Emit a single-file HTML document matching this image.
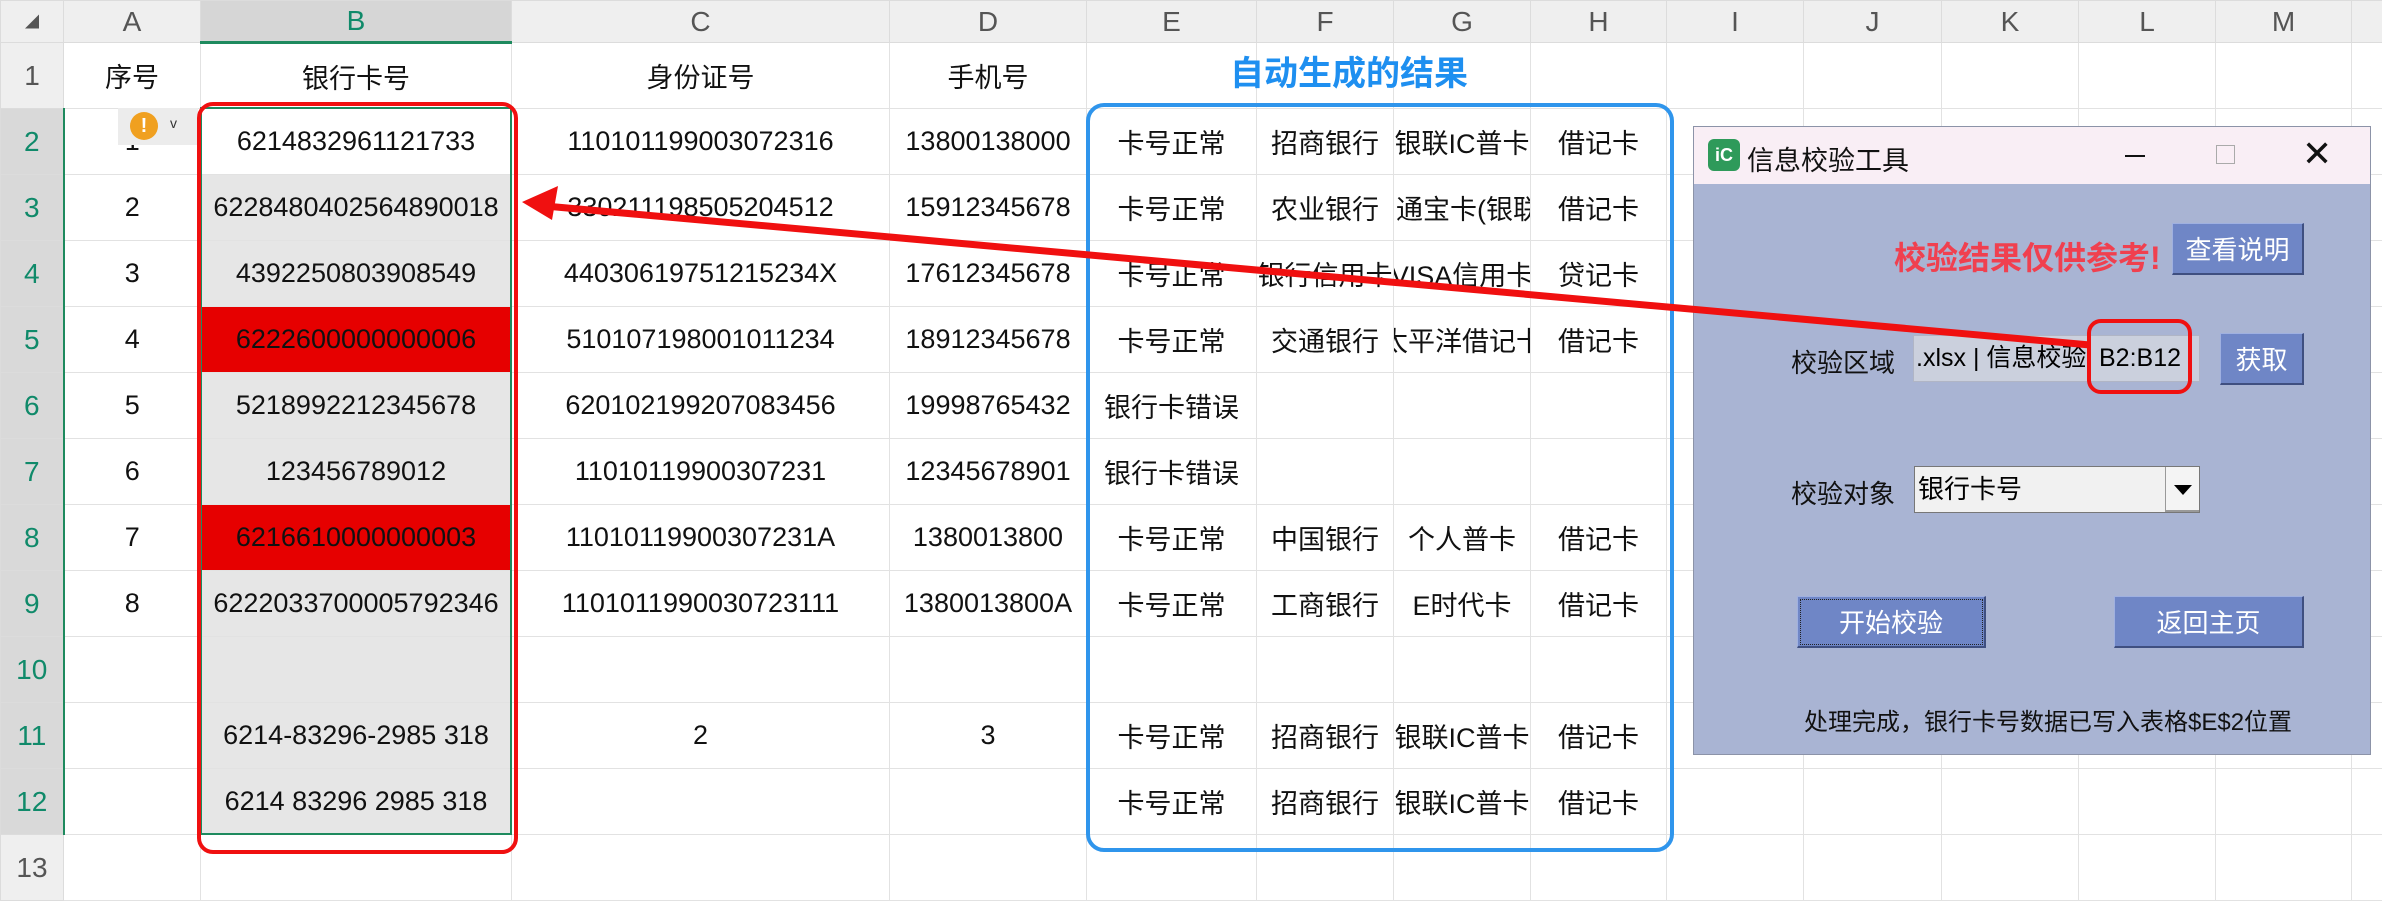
<!DOCTYPE html>
<html><head><meta charset="utf-8"><style>
*{margin:0;padding:0;box-sizing:border-box}
body{width:2382px;height:869px;overflow:hidden;background:#fff;position:relative;font-family:"Liberation Sans","Noto Sans CJK SC",sans-serif}
table{border-collapse:collapse;table-layout:fixed;position:absolute;left:0;top:0;width:2391px}
td{border:1px solid #e2e2e2;height:66px;font-size:27px;color:#111;white-space:nowrap;overflow:hidden;padding:0;max-width:0}
td div{display:flex;justify-content:center;align-items:center;height:100%;width:100%;white-space:nowrap}
tr.h td{height:42px;background:#efefef;color:#555;font-size:28px;border-color:#dcdcdc}
td.rh{background:#efefef;color:#555;font-size:28px;border-color:#dcdcdc}
td.rs{background:#d9d9d9;color:#108a6a;border-right:2px solid #1e8a5e}
td.bs{background:#e6e6e6}
td.red{background:#e60000}
tr.h td.bh{background:#d6d6d6;color:#108a6a;border-bottom:3px solid #1e8a5e}
.dlg{position:absolute;left:1693px;top:126px;width:678px;height:629px;background:#a9b4d3;border:1px solid #8c93a8}
.tb{position:absolute;left:0;top:0;width:100%;height:57px;background:#f9eef5}
.btn{position:absolute;background:#6f86c6;color:#fff;font-size:26px;display:flex;align-items:center;justify-content:center;border-right:2px solid #3f4f80;border-bottom:2px solid #3f4f80;border-top:1px solid #9fb0e0;border-left:1px solid #9fb0e0}
.lbl{position:absolute;font-size:26px;color:#111}
</style></head><body>
<table>
<colgroup><col style="width:63px"><col style="width:137px"><col style="width:311px"><col style="width:378px"><col style="width:197px"><col style="width:170px"><col style="width:137px"><col style="width:137px"><col style="width:136px"><col style="width:137px"><col style="width:138px"><col style="width:137px"><col style="width:137px"><col style="width:136px"><col style="width:40px"></colgroup>
<tr class="h"><td><div style="font-size:14px">◢</div></td><td><div>A</div></td><td class="bh"><div>B</div></td><td><div>C</div></td><td><div>D</div></td><td><div>E</div></td><td><div>F</div></td><td><div>G</div></td><td><div>H</div></td><td><div>I</div></td><td><div>J</div></td><td><div>K</div></td><td><div>L</div></td><td><div>M</div></td><td></td></tr>
<tr><td class="rh"><div>1</div></td><td><div>序号</div></td><td><div>银行卡号</div></td><td><div>身份证号</div></td><td><div>手机号</div></td><td></td><td></td><td></td><td></td><td></td><td></td><td></td><td></td><td></td><td></td></tr>
<tr><td class="rh rs"><div>2</div></td><td><div>1</div></td><td><div>6214832961121733</div></td><td><div>110101199003072316</div></td><td><div>13800138000</div></td><td><div>卡号正常</div></td><td><div>招商银行</div></td><td><div>银联IC普卡</div></td><td><div>借记卡</div></td><td></td><td></td><td></td><td></td><td></td><td></td></tr>
<tr><td class="rh rs"><div>3</div></td><td><div>2</div></td><td class="bs"><div>6228480402564890018</div></td><td><div>330211198505204512</div></td><td><div>15912345678</div></td><td><div>卡号正常</div></td><td><div>农业银行</div></td><td><div style="justify-content:flex-start;padding-left:2px">通宝卡(银联卡)</div></td><td><div>借记卡</div></td><td></td><td></td><td></td><td></td><td></td><td></td></tr>
<tr><td class="rh rs"><div>4</div></td><td><div>3</div></td><td class="bs"><div>4392250803908549</div></td><td><div>44030619751215234X</div></td><td><div>17612345678</div></td><td><div>卡号正常</div></td><td><div>银行信用卡</div></td><td><div>VISA信用卡</div></td><td><div>贷记卡</div></td><td></td><td></td><td></td><td></td><td></td><td></td></tr>
<tr><td class="rh rs"><div>5</div></td><td><div>4</div></td><td class="red"><div>6222600000000006</div></td><td><div>510107198001011234</div></td><td><div>18912345678</div></td><td><div>卡号正常</div></td><td><div>交通银行</div></td><td><div>太平洋借记卡</div></td><td><div>借记卡</div></td><td></td><td></td><td></td><td></td><td></td><td></td></tr>
<tr><td class="rh rs"><div>6</div></td><td><div>5</div></td><td class="bs"><div>5218992212345678</div></td><td><div>620102199207083456</div></td><td><div>19998765432</div></td><td><div>银行卡错误</div></td><td></td><td></td><td></td><td></td><td></td><td></td><td></td><td></td><td></td></tr>
<tr><td class="rh rs"><div>7</div></td><td><div>6</div></td><td class="bs"><div>123456789012</div></td><td><div>11010119900307231</div></td><td><div>12345678901</div></td><td><div>银行卡错误</div></td><td></td><td></td><td></td><td></td><td></td><td></td><td></td><td></td><td></td></tr>
<tr><td class="rh rs"><div>8</div></td><td><div>7</div></td><td class="red"><div>6216610000000003</div></td><td><div>11010119900307231A</div></td><td><div>1380013800</div></td><td><div>卡号正常</div></td><td><div>中国银行</div></td><td><div>个人普卡</div></td><td><div>借记卡</div></td><td></td><td></td><td></td><td></td><td></td><td></td></tr>
<tr><td class="rh rs"><div>9</div></td><td><div>8</div></td><td class="bs"><div>6222033700005792346</div></td><td><div>1101011990030723111</div></td><td><div>1380013800A</div></td><td><div>卡号正常</div></td><td><div>工商银行</div></td><td><div>E时代卡</div></td><td><div>借记卡</div></td><td></td><td></td><td></td><td></td><td></td><td></td></tr>
<tr><td class="rh rs"><div>10</div></td><td></td><td class="bs"></td><td></td><td></td><td></td><td></td><td></td><td></td><td></td><td></td><td></td><td></td><td></td><td></td></tr>
<tr><td class="rh rs"><div>11</div></td><td></td><td class="bs"><div>6214-83296-2985 318</div></td><td><div>2</div></td><td><div>3</div></td><td><div>卡号正常</div></td><td><div>招商银行</div></td><td><div>银联IC普卡</div></td><td><div>借记卡</div></td><td></td><td></td><td></td><td></td><td></td><td></td></tr>
<tr><td class="rh rs"><div>12</div></td><td></td><td class="bs"><div>6214 83296 2985 318</div></td><td></td><td></td><td><div>卡号正常</div></td><td><div>招商银行</div></td><td><div>银联IC普卡</div></td><td><div>借记卡</div></td><td></td><td></td><td></td><td></td><td></td><td></td></tr>
<tr><td class="rh"><div>13</div></td><td></td><td></td><td></td><td></td><td></td><td></td><td></td><td></td><td></td><td></td><td></td><td></td><td></td><td></td></tr>
</table>
<div style="position:absolute;left:200px;top:107px;width:312px;height:728px;border:2px solid #1e8a5e"></div>
<div style="position:absolute;left:118px;top:108px;width:80px;height:37px;background:#ececec"></div>
<div style="position:absolute;left:130px;top:112px;width:28px;height:28px;border-radius:50%;background:#f0a020;color:#fff;font-weight:bold;font-size:20px;text-align:center;line-height:28px">!</div>
<div style="position:absolute;left:170px;top:115px;font-size:14px;color:#333">v</div>
<div style="position:absolute;left:197px;top:102px;width:321px;height:752px;border:4px solid #f01010;border-radius:16px"></div>
<div style="position:absolute;left:1086px;top:103px;width:588px;height:749px;border:4px solid #2f95ec;border-radius:18px"></div>
<div style="position:absolute;left:1230px;top:46px;font-size:34px;font-weight:bold;color:#1e8ff0">自动生成的结果</div>
<div class="dlg">
 <div class="tb">
  <div style="position:absolute;left:14px;top:12px;width:32px;height:32px;border-radius:6px;background:#2e9a5a;color:#fff;font-size:18px;font-weight:bold;text-align:center;line-height:32px">iC</div>
  <div style="position:absolute;left:53px;top:12px;font-size:27px;color:#111">信息校验工具</div>
  <div style="position:absolute;left:431px;top:28px;width:20px;height:2px;background:#111"></div>
  <div style="position:absolute;left:522px;top:18px;width:19px;height:19px;border:1px solid #aaa"></div>
  <div style="position:absolute;left:608px;top:6px;font-size:36px;color:#111;font-weight:300">✕</div>
 </div>
 <div style="position:absolute;left:200px;top:106px;font-size:32px;font-weight:bold;color:#f0404f;white-space:nowrap">校验结果仅供参考!</div>
 <div class="btn" style="left:478px;top:96px;width:132px;height:52px">查看说明</div>
 <div class="lbl" style="left:97px;top:216px">校验区域</div>
 <div style="position:absolute;left:219px;top:208px;width:287px;height:47px;background:#cbd0dd;border:1px solid #b0b5c5;font-size:25px;line-height:45px;white-space:nowrap;overflow:hidden">
  <span style="position:absolute;left:2px;top:0">.xlsx | 信息校验</span>
  <span style="position:absolute;left:183px;top:0;background:#cbd0dd;padding-left:2px">B2:B12</span>
 </div>
 <div style="position:absolute;left:393px;top:192px;width:105px;height:75px;border:4px solid #f01010;border-radius:14px"></div>
 <div class="btn" style="left:526px;top:206px;width:84px;height:52px">获取</div>
 <div class="lbl" style="left:97px;top:347px">校验对象</div>
 <div style="position:absolute;left:220px;top:339px;width:286px;height:47px;background:#f1f1f1;border:1px solid #777;font-size:26px;line-height:45px;padding-left:3px">银行卡号
  <div style="position:absolute;right:0;top:0;width:34px;height:45px;background:#f4f4f4;border-left:1px solid #999;border-bottom:2px solid #999"><div style="position:absolute;left:8px;top:18px;border-left:9px solid transparent;border-right:9px solid transparent;border-top:10px solid #000"></div></div>
 </div>
 <div class="btn" style="left:103px;top:469px;width:189px;height:52px;outline:1px dotted #222;outline-offset:-4px">开始校验</div>
 <div class="btn" style="left:420px;top:469px;width:190px;height:52px">返回主页</div>
 <div class="lbl" style="left:110px;top:575px;font-size:24px">处理完成，银行卡号数据已写入表格$E$2位置</div>
</div>
<svg style="position:absolute;left:0;top:0" width="2382" height="869">
 <line x1="2090" y1="345" x2="545" y2="206" stroke="#f01010" stroke-width="7"/>
 <polygon points="522,202 558,186 552,220" fill="#f01010"/>
</svg>
</body></html>
